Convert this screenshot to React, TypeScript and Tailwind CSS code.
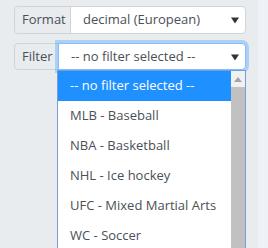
const options = [
  '-- no filter selected --',
  'MLB - Baseball',
  'NBA - Basketball',
  'NHL - Ice hockey',
  'UFC - Mixed Martial Arts',
  'WC - Soccer',
]

function Caret() {
  return (
    <svg width="8" height="8" viewBox="0 0 8 8" className="fill-[#333]">
      <path d="M0 1.5h8L4 7.5z" />
    </svg>
  )
}

export default function App() {
  return (
    <div className="flex h-[248px] w-[268px] overflow-hidden text-[13px] text-[#495057]" style={{ fontFamily: '"Open Sans", sans-serif' }}>
      <div className="w-[258px] bg-[#e9ecef] pl-[14px] pt-[6px]">
        {/* Format */}
        <div className="flex h-[28px] w-[232px]">
          <div className="flex w-[57px] items-center rounded-l border border-[#ced4da] bg-[#e9ecef] pl-[7px]">Format</div>
          <div className="-ml-px flex flex-1 items-center justify-between rounded-r border border-[#ced4da] bg-white pl-[12px] pr-[6px]">
            <span>decimal (European)</span>
            <Caret />
          </div>
        </div>

        {/* Filter */}
        <div className="relative mt-[9px] flex h-[27px] w-[232px]">
          <div className="flex w-[45px] items-center rounded-l border border-[#ced4da] bg-[#e9ecef] pl-[7px]">Filter</div>
          <div className="-ml-px flex flex-1 items-center justify-between rounded-r border border-[#80bdff] bg-white pl-[12px] pr-[6px] shadow-[0_0_0_3px_rgba(0,123,255,0.25)]">
            <span>-- no filter selected --</span>
            <Caret />
          </div>

          {/* open list */}
          <div className="absolute left-[43px] top-[27px] flex h-[190px] w-[189px] border border-[#7a9cd3] bg-white">
            <div className="flex-1">
              {options.map((o, i) => (
                <div
                  key={o}
                  className={`flex h-[30px] items-center pl-[12px] ${i === 0 ? 'bg-[#1e90ff] text-white' : ''}`}
                >
                  {o}
                </div>
              ))}
            </div>
            <div className="flex w-[14px] flex-col bg-[#f1f1f1]">
              <div className="flex h-[16px] items-center justify-center">
                <svg width="8" height="5" viewBox="0 0 8 5" className="fill-[#a3a3a3]">
                  <path d="M0 5L4 0l4 5z" />
                </svg>
              </div>
              <div className="flex-1 bg-[#c1c1c1]" />
            </div>
          </div>
        </div>
      </div>
      <div className="flex-1 bg-[#eef2f8]" />
    </div>
  )
}
